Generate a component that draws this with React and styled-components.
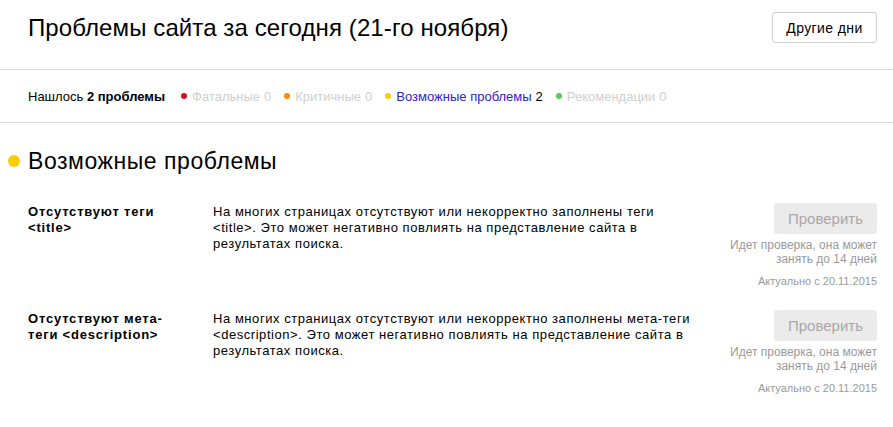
import React from "react";
import styled, { createGlobalStyle } from "styled-components";

const Global = createGlobalStyle`
  html, body { margin: 0; padding: 0; background: #fff; }
  body { font-family: "Liberation Sans", Arial, sans-serif; color: #000; }
`;

const Page = styled.div`
  width: 893px;
`;

const Header = styled.header`
  display: flex;
  align-items: center;
  justify-content: space-between;
  height: 70px;
  padding: 0 16px 14px 28px;
  box-sizing: border-box;
  border-bottom: 1px solid #dcdcdc;
`;

const Title = styled.h1`
  margin: 0;
  font-size: 24px;
  font-weight: normal;
  letter-spacing: 0.1px;
  line-height: 28px;
`;

const GhostButton = styled.button`
  width: 105px;
  height: 31px;
  border: 1px solid #d0d0d0;
  border-radius: 3px;
  background: #fff;
  font-family: inherit;
  font-size: 14px;
  letter-spacing: 0.4px;
  color: #000;
  padding: 0;
`;

const Summary = styled.div`
  display: flex;
  align-items: center;
  height: 52px;
  padding: 0 28px;
  border-bottom: 1px solid #dcdcdc;
  font-size: 13px;
  gap: 13px;
`;

const Found = styled.span`
  margin-right: 3px;
  b { font-weight: bold; }
`;

const Legend = styled.span`
  display: inline-flex;
  align-items: center;
  color: ${(p) => (p.$active ? "#3322cc" : "#cfcfcf")};
`;

const Dot = styled.span`
  display: inline-block;
  width: ${(p) => p.$size}px;
  height: ${(p) => p.$size}px;
  border-radius: 50%;
  background: ${(p) => p.$color};
  margin-right: ${(p) => p.$gap}px;
  flex: none;
`;

const Count = styled.span`
  margin-left: 4px;
  color: ${(p) => (p.$active ? "#000" : "#cfcfcf")};
`;

const Section = styled.section`
  padding: 24px 16px 0 28px;
`;

const SectionTitle = styled.h2`
  display: flex;
  align-items: center;
  margin: 0 0 0 -20px;
  font-size: 23px;
  letter-spacing: 0.55px;
  font-weight: normal;
  line-height: 28px;
`;

const Row = styled.div`
  display: grid;
  grid-template-columns: 185px 485px 1fr;
  align-items: start;
  margin-top: ${(p) => p.$top}px;
`;

const IssueTitle = styled.div`
  font-size: 13px;
  font-weight: bold;
  letter-spacing: 0.8px;
  line-height: 16px;
  padding-top: 1px;
  padding-right: 35px;
`;

const Desc = styled.div`
  font-size: 13px;
  letter-spacing: 0.55px;
  line-height: 16px;
  padding-top: 1px;
`;

const Side = styled.div`
  display: flex;
  flex-direction: column;
  align-items: flex-end;
  text-align: right;
`;

const CheckButton = styled.button`
  width: 103px;
  height: 31px;
  border: none;
  border-radius: 3px;
  background: #ebebeb;
  color: #a8a8a8;
  font-family: inherit;
  font-size: 15px;
  padding: 0;
`;

const Note = styled.div`
  margin-top: 4px;
  font-size: 12px;
  line-height: 14px;
  color: #9a9a9a;
`;

const Date = styled.div`
  margin-top: 8px;
  font-size: 11px;
  line-height: 14px;
  color: #9a9a9a;
`;

const legend = [
  { label: "Фатальные", count: 0, color: "#d0121b" },
  { label: "Критичные", count: 0, color: "#ff8c00" },
  { label: "Возможные проблемы", count: 2, color: "#ffcc00", active: true },
  { label: "Рекомендации", count: 0, color: "#5ac75a" },
];

const issues = [
  {
    title: "Отсутствуют теги <title>",
    desc: "На многих страницах отсутствуют или некорректно заполнены теги <title>. Это может негативно повлиять на представление сайта в результатах поиска.",
    top: 28,
  },
  {
    title: "Отсутствуют мета-теги <description>",
    desc: "На многих страницах отсутствуют или некорректно заполнены мета-теги <description>. Это может негативно повлиять на представление сайта в результатах поиска.",
    top: 22,
  },
];

export default function App() {
  return (
    <Page>
      <Global />
      <Header>
        <Title>Проблемы сайта за сегодня (21-го ноября)</Title>
        <GhostButton>Другие дни</GhostButton>
      </Header>
      <Summary>
        <Found>
          Нашлось <b>2 проблемы</b>
        </Found>
        {legend.map((l) => (
          <Legend key={l.label} $active={l.active}>
            <Dot $size={6} $color={l.color} $gap={5} />
            {l.label}
            <Count $active={l.active}>{l.count}</Count>
          </Legend>
        ))}
      </Summary>
      <Section>
        <SectionTitle>
          <Dot $size={12} $color="#ffcc00" $gap={8} />
          Возможные проблемы
        </SectionTitle>
        {issues.map((it) => (
          <Row key={it.title} $top={it.top}>
            <IssueTitle>{it.title}</IssueTitle>
            <Desc>{it.desc}</Desc>
            <Side>
              <CheckButton>Проверить</CheckButton>
              <Note>
                Идет проверка, она может
                <br />
                занять до 14 дней
              </Note>
              <Date>Актуально с 20.11.2015</Date>
            </Side>
          </Row>
        ))}
      </Section>
    </Page>
  );
}
